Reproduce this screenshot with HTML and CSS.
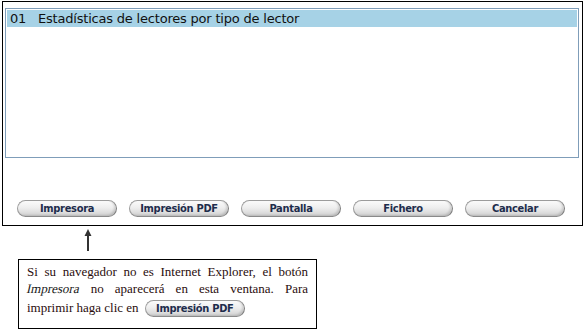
FILE: index.html
```html
<!DOCTYPE html>
<html>
<head>
<meta charset="utf-8">
<link rel="stylesheet" href="styles.css">
</head>
<body>
<div class="dialog">
  <div class="list">
    <div class="row sel"><span class="code">01</span><span>Estadísticas de lectores por tipo de lector</span></div>
  </div>
  <div class="buttons">
    <span class="btn">Impresora</span>
    <span class="btn">Impresión PDF</span>
    <span class="btn">Pantalla</span>
    <span class="btn">Fichero</span>
    <span class="btn">Cancelar</span>
  </div>
</div>
<div class="arrow">
  <svg width="10" height="22" viewBox="0 0 10 22"><path d="M5 0 L8.5 7 L6 7 L6 22 L4 22 L4 7 L1.5 7 Z" fill="#333"/></svg>
</div>
<div class="note">
  <p>Si su navegador no es Internet Explorer, el botón <span class="it">Impresora</span> no aparecerá en esta ventana. Para imprimir haga clic en <span class="btn btn-inline">Impresión PDF</span></p>
</div>
</body>
</html>
```
FILE: styles.css
```css
html, body { margin: 0; padding: 0; background: #fff; }
body { width: 585px; height: 336px; overflow: hidden; }

.dialog {
  box-sizing: border-box;
  margin: 1px 0 0 2px;
  width: 581px;
  height: 225px;
  border: 1px solid #000;
  padding: 6px 3px 0 2px;
  display: flex;
  flex-direction: column;
}

.list {
  box-sizing: border-box;
  width: 574px;
  height: 150px;
  border: 1px solid #7f9db9;
  padding: 1px;
}

.row {
  height: 17px;
  display: flex;
  align-items: center;
  font-family: "DejaVu Sans", Verdana, sans-serif;
  font-size: 13px;
  color: #111;
  padding-left: 3px;
  letter-spacing: -0.2px;
}
.sel { background: #a6d2e6; }
.code { width: 28px; }

.buttons {
  display: flex;
  gap: 12px;
  margin-top: 42px;
  padding-left: 12px;
}

.btn {
  box-sizing: border-box;
  display: inline-flex;
  align-items: center;
  justify-content: center;
  width: 100px;
  height: 17px;
  border: 1px solid #9c9c9c;
  border-right-color: #7e7e7e;
  border-bottom-color: #8a8a8a;
  border-radius: 9px;
  background: linear-gradient(#fbfbfb 0%, #eeeeee 45%, #dedede 75%, #cfcfcf 100%);
  box-shadow: inset -2px -1px 2px rgba(0,0,0,0.12);
  font-family: "DejaVu Sans Condensed", "DejaVu Sans", sans-serif;
  font-weight: bold;
  font-size: 11px;
  color: #1e2d4c;
  letter-spacing: -0.3px;
}

.arrow {
  margin: 3px 0 0 83px;
  height: 24px;
}
.arrow svg { display: block; }

.note {
  box-sizing: border-box;
  margin: 6px 0 0 18px;
  width: 299px;
  height: 70px;
  border: 1px solid #000;
  padding: 3px 8px 0 8px;
}
.note p {
  margin: 0;
  font-family: "Liberation Serif", "Times New Roman", serif;
  font-size: 13px;
  line-height: 17px;
  color: #2a0d0d;
  text-align: justify;
}
.it {
  display: inline-block;
  transform: skewX(-13deg);
  color: #1a1a1a;
}
.btn-inline {
  width: 100px;
  height: 17px;
  vertical-align: baseline;
  margin-left: 3px;
  margin-top: 3px;
}
```
